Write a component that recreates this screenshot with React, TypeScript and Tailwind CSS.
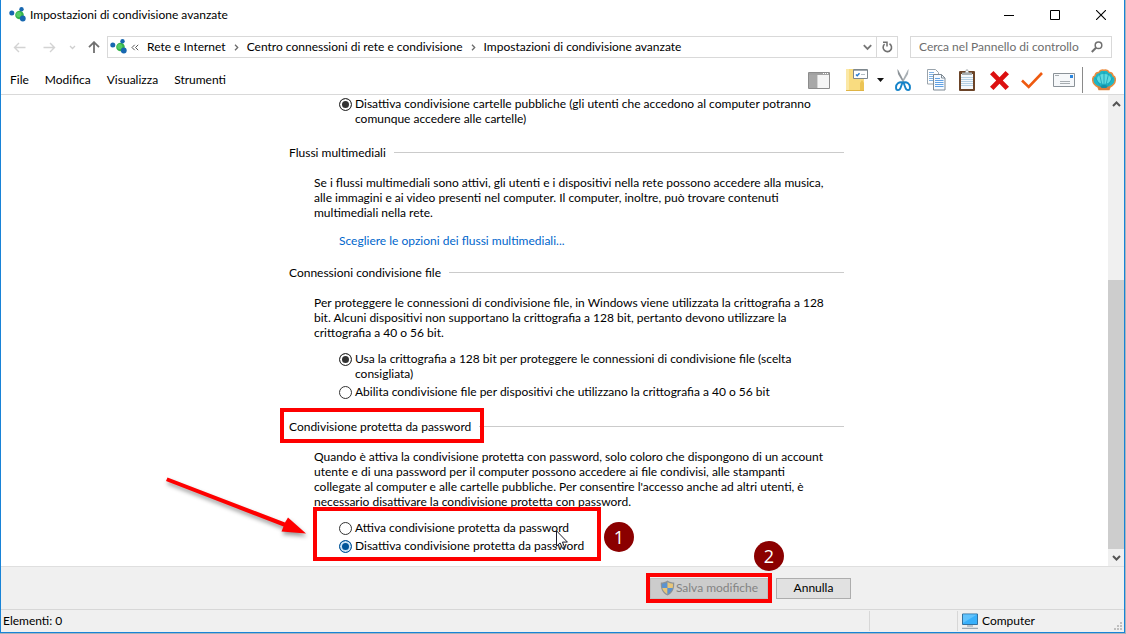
import type React from "react";

interface SectionProps {
  title: string;
  highlighted?: boolean;
  className?: string;
  children: React.ReactNode;
}

interface OptionProps {
  name: string;
  checked?: boolean;
  active?: boolean;
  children: React.ReactNode;
}

const NetworkIcon = () => (
  <svg width="17" height="17" viewBox="0 0 17 17" className="shrink-0">
    <circle cx="10.5" cy="8" r="4.300" fill="#35b34a" />
    <circle cx="9.800" cy="7.500" r="2.600" fill="#55cc66" />
    <circle cx="2.800" cy="6" r="2.500" fill="#1767b0" />
    <circle cx="12.500" cy="2.300" r="2.200" fill="#1767b0" />
    <circle cx="13.800" cy="11.500" r="2.900" fill="#1767b0" />
  </svg>
);

const Chevron = () => (
  <svg width="5" height="7" viewBox="0 0 5 7" fill="none" className="shrink-0">
    <path d="M1 .8 3.700 3.500 1 6.200" stroke="#6b6b6b" strokeWidth="1.300" />
  </svg>
);

const TitleBar = () => (
  <header className="flex h-[30px] items-center pl-2">
    <NetworkIcon />
    <h1 className="ml-1 flex-1">Impostazioni di condivisione avanzate</h1>
    <button aria-label="Riduci a icona" className="flex h-[28px] w-[46px] items-center justify-center">
      <svg width="10" height="10" viewBox="0 0 10 10">
        <path d="M0 5.500h10" stroke="#000" />
      </svg>
    </button>
    <button aria-label="Ingrandisci" className="flex h-[28px] w-[46px] items-center justify-center">
      <svg width="10" height="10" viewBox="0 0 10 10" fill="none">
        <path d="M.5 .5h9v9h-9z" stroke="#000" />
      </svg>
    </button>
    <button aria-label="Chiudi" className="flex h-[28px] w-[46px] items-center justify-center">
      <svg width="10" height="10" viewBox="0 0 10 10" fill="none">
        <path d="M0 0 10 10M10 0 0 10" stroke="#000" strokeWidth="1.100" />
      </svg>
    </button>
  </header>
);

const AddressBar = () => (
  <nav className="flex h-[34px] items-center pr-3 pl-3">
    <button aria-label="Indietro" className="w-[30px]">
      <svg width="13" height="11" viewBox="0 0 13 11" fill="none">
        <path d="M12.500 5.500H1.500M6 1 1.500 5.500 6 10" stroke="#d3d3d3" strokeWidth="1.400" />
      </svg>
    </button>
    <button aria-label="Avanti" className="w-[26px]">
      <svg width="13" height="11" viewBox="0 0 13 11" fill="none">
        <path d="M.5 5.500h11M7 1l4.500 4.500L7 10" stroke="#d3d3d3" strokeWidth="1.400" />
      </svg>
    </button>
    <button aria-label="Percorsi recenti" className="w-[19px]">
      <svg width="7" height="5" viewBox="0 0 7 5" fill="none">
        <path d="M1 1 3.500 3.500 6 1" stroke="#cfcfcf" strokeWidth="1.300" />
      </svg>
    </button>
    <button aria-label="Livello superiore" className="w-[19px]">
      <svg width="12" height="12" viewBox="0 0 12 12" fill="none">
        <path d="M6 12V1.500M1 6.200 6 1.200l5 5" stroke="#707070" strokeWidth="1.800" />
      </svg>
    </button>
    <div className="flex h-[22px] flex-1 border border-[#d9d9d9]">
      <div className="flex flex-1 items-center gap-2 pl-[2px] whitespace-nowrap">
        <div className="flex items-center gap-1">
          <NetworkIcon />
          <svg width="8" height="7" viewBox="0 0 8 7" fill="none">
            <path d="M3.700 .8 1 3.500l2.700 2.700M7.200 .8 4.500 3.500l2.700 2.700" stroke="#555" />
          </svg>
        </div>
        <a href="#rete">Rete e Internet</a>
        <Chevron />
        <a href="#centro">Centro connessioni di rete e condivisione</a>
        <Chevron />
        <a href="#avanzate">Impostazioni di condivisione avanzate</a>
      </div>
      <button aria-label="Posizioni precedenti" className="flex w-[18px] items-center justify-center">
        <svg width="9" height="7" viewBox="0 0 9 7" fill="none">
          <path d="M.8 1.200 4.500 5 8.200 1.200" stroke="#777" strokeWidth="1.800" />
        </svg>
      </button>
      <button aria-label="Aggiorna" className="flex w-[21px] items-center justify-center border-l border-[#d9d9d9]">
        <svg width="11" height="12" viewBox="0 0 11 12" fill="none">
          <path d="M7.500 2.800A4.200 4.200 0 1 1 2.600 3.200" stroke="#707070" strokeWidth="1.600" />
          <path d="M1 1.300h4v4.200" stroke="#707070" strokeWidth="1.500" />
        </svg>
      </button>
    </div>
    <label className="ml-3 flex h-[22px] w-[202px] items-center border border-[#d9d9d9] pr-2 pl-2">
      <input
        type="text"
        aria-label="Cerca"
        placeholder="Cerca nel Pannello di controllo"
        className="w-full min-w-0 flex-1 outline-none placeholder:text-[#6d6d6d]"
      />
      <svg width="12" height="12" viewBox="0 0 12 12" fill="none" className="shrink-0">
        <circle cx="7.500" cy="4.300" r="3.300" stroke="#707070" strokeWidth="1.500" />
        <path d="M5 6.700 .8 11" stroke="#707070" strokeWidth="2" />
      </svg>
    </label>
  </nav>
);

const Toolbar = () => (
  <div className="flex items-center">
    <button aria-label="Riquadro" className="w-[38px]">
      <svg width="22" height="17" viewBox="0 0 22 17">
        <path d="M.5 .5h21v16H.5z" fill="#f5f5f5" stroke="#8c8c8c" />
        <path d="M1 1h20v2H1z" fill="#a2a2a2" />
        <path d="M15 1.500h1M17 1.500h1M19 1.500h1" stroke="#fff" />
        <path d="M1 3h8v13H1z" fill="#a8a8a8" />
        <path d="M9.500 3v13" stroke="#d4d4d4" />
      </svg>
    </button>
    <button aria-label="Organizza" className="w-[31px]">
      <svg width="22" height="22" viewBox="0 0 22 22">
        <path d="M0 0h18v22H0z" fill="#f9dc80" />
        <path d="M0 0h3v22H0z" fill="#fbe8a6" />
        <path d="M14 14l2-3 2 3v8h-4z" fill="#ecc455" />
        <path d="M0 21.500h18" stroke="#dfb445" />
        <path d="M7.500 .5h14v9h-14z" fill="#fff" stroke="#7e878d" />
        <path d="M8 1h13v1H8z" fill="#a4abb0" />
        <path d="M10 5.500 11.200 6.800l2.300-2.600" fill="none" stroke="#2478cc" strokeWidth="1.400" />
        <path d="M15 5.500h4" stroke="#b5bfc5" />
      </svg>
    </button>
    <button aria-label="Altre opzioni" className="w-[18px]">
      <svg width="7" height="4" viewBox="0 0 7 4">
        <path d="M0 0h7L3.500 4z" fill="#111" />
      </svg>
    </button>
    <button aria-label="Taglia" className="w-[32px]">
      <svg width="16" height="23" viewBox="0 0 16 23" fill="none">
        <path d="M2.300 0 3.500 1.500 10.500 15 8.600 14.500 3 5z" fill="#8d9499" />
        <path d="M13.700 0 12.500 1.500 5.500 15l1.900-.5L13 5z" fill="#a9b0b5" />
        <path d="M7.500 13.500C4 12.500 1 15 1 18.500s3.500 3.500 4.700 0zM8.500 13.500c3.500-1 6.500 1.500 6.500 5s-3.500 3.500-4.700 0z" stroke="#1583c9" strokeWidth="1.900" />
      </svg>
    </button>
    <button aria-label="Copia" className="w-[32px]">
      <svg width="19" height="22" viewBox="0 0 19 22">
        <path d="M.5 .5h8l3 3V15H.5z" fill="#fff" stroke="#9aa4ac" />
        <path d="M2 3.500h5M2 5.500h7M2 7.500h7M2 9.500h7M2 11.500h7" stroke="#7fb2e5" />
        <path d="M6.500 5.500h8l3.500 3.500v12H6.500z" fill="#f6faff" stroke="#7f8a94" />
        <path d="M14.500 5.500V9H18" fill="none" stroke="#7f8a94" />
        <path d="M8 9.500h5M8 11.500h8.500M8 13.500h8.500M8 15.500h8.500M8 17.500h8.500" stroke="#62a2e4" />
      </svg>
    </button>
    <button aria-label="Incolla" className="w-[31px]">
      <svg width="16" height="22" viewBox="0 0 16 22">
        <rect y="2" width="16" height="20" rx="1" fill="#6b4428" />
        <path d="M2 5h12v15H2z" fill="#f4f9fd" />
        <path d="M2 8.500h12M2 10.500h12M2 12.500h12M2 14.500h12M2 16.500h12" stroke="#b5d0e4" />
        <path d="M3 6V3.500h3L7 .5h2l1 3h3V6z" fill="#a7adb0" />
        <circle cx="8" cy="2.500" r="1" fill="#fff" />
      </svg>
    </button>
    <button aria-label="Elimina" className="w-[31px]">
      <svg width="19" height="19" viewBox="0 0 19 19">
        <path d="M3.500 0 9.500 6.200 15.500 0 19 3.300 12.800 9.500 19 15.700 15.500 19 9.500 12.800 3.500 19 0 15.700 6.200 9.500 0 3.300z" fill="#dc1010" />
      </svg>
    </button>
    <button aria-label="Proprietà" className="w-[32px]">
      <svg width="22" height="17" viewBox="0 0 22 17" fill="none">
        <path d="M1 8.500 7.700 15 21 1" stroke="#ee5a10" strokeWidth="2.600" />
      </svg>
    </button>
    <button aria-label="Rinomina" className="w-[29px]">
      <svg width="22" height="14" viewBox="0 0 22 14">
        <path d="M.5 .5h21v13H.5z" fill="#f6f8fa" stroke="#8b9298" />
        <path d="M2 2.500h4M7 8.500h10M7 10.500h10" stroke="#a6acb0" />
        <path d="M17 2h3v3h-3z" fill="#2a86df" />
      </svg>
    </button>
    <span className="h-[26px] w-px bg-[#8a8a8a]" />
    <button aria-label="Classic Shell" className="ml-[9px] w-[24px]">
      <svg width="24" height="22" viewBox="0 0 24 22">
        <path
          d="M7 20.500 6 18C3 16.500.7 13.500.7 10.500c0-2 1-3.300 2.300-3.700C3.300 4.500 5 3.400 6.800 3.500 7.700 1.600 10 .8 12 1.300c2-.5 4.300.3 5.200 2.200 1.800-.1 3.500 1 3.800 3.300 1.300.4 2.300 1.700 2.300 3.700 0 3-2.300 6-5.300 7.500l-1 2.500z"
          fill="#1fb5c4"
          stroke="#ec8b3c"
          strokeWidth="1.500"
        />
        <ellipse cx="12" cy="10" rx="7" ry="5" fill="#5edbe0" />
        <path d="M12 18V3M10.500 18 7.500 5M13.500 18l3-13M9 18 3.500 9M15 18l5.500-9" stroke="#1a9db5" fill="none" strokeWidth=".8" />
        <path d="M5.500 16.500c3 2 10 2 13 0L17 21H7z" fill="#d8803f" />
        <path d="M8.500 17c2-1.500 5-1.500 7 0l-1 2h-5z" fill="#1590a8" />
      </svg>
    </button>
  </div>
);

const MenuBar = () => (
  <div className="flex h-[31px] items-center justify-between border-b border-[#d9d9d9] pt-[2px] pr-2 pl-[9px]">
    <div className="flex gap-4">
      <button>File</button>
      <button>Modifica</button>
      <button>Visualizza</button>
      <button>Strumenti</button>
    </div>
    <Toolbar />
  </div>
);

const Option: React.FC<OptionProps> = ({ name, checked = false, active = false, children }) => (
  <label className="flex items-start gap-[3px]">
    <input
      type="radio"
      name={name}
      defaultChecked={checked}
      className={`mt-[2px] h-[13px] w-[13px] shrink-0 appearance-none rounded-full border ${
        active
          ? "border-[#005499] checked:bg-[#005499] checked:shadow-[inset_0_0_0_2px_#cce4f7]"
          : "border-[#333] checked:bg-[#333] checked:shadow-[inset_0_0_0_2px_#fff]"
      }`}
    />
    <span>{children}</span>
  </label>
);

const Section: React.FC<SectionProps> = ({ title, highlighted = false, className = "", children }) => (
  <section className={className}>
    <div className="flex items-center">
      <h2 className="relative pr-2">
        {title}
        {highlighted && (
          <span className="absolute -top-[11px] -right-[5px] -bottom-[9px] -left-[9px] border-4 border-[#fe0000]" />
        )}
      </h2>
      <span className="h-px flex-1 bg-[#cbcbcb]" />
    </div>
    <div className="mt-[15px] pl-[25px]">{children}</div>
  </section>
);

const Badge = ({ value, className }: { value: number; className: string }) => (
  <span
    className={`absolute z-10 flex h-[30px] w-[30px] items-center justify-center rounded-full bg-[#8b0000] font-['Open_Sans',sans-serif] text-lg text-white ${className}`}
  >
    {value}
  </span>
);

const Arrow = () => (
  <svg
    width="148"
    height="68"
    viewBox="0 0 148 68"
    className="absolute -top-[44px] -left-[150px] drop-shadow-[1px_3px_2px_rgba(0,0,0,0.4)]"
  >
    <path d="M3.500 1.500 2 5 119.500 50.500 117.500 55.500 142 57.500 124 41.500 121 46.500z" fill="#fe0000" />
  </svg>
);

const Scrollbar = () => (
  <div className="flex w-4 shrink-0 flex-col items-center bg-[#f0f0f0]">
    <button aria-label="Scorri in alto" className="flex h-[17px] items-center">
      <svg width="9" height="6" viewBox="0 0 9 6" fill="none">
        <path d="M1 5 4.500 1.500 8 5" stroke="#555" strokeWidth="2" />
      </svg>
    </button>
    <div className="w-full flex-[168]" />
    <div className="w-full flex-[269] bg-[#cdcdcd]" />
    <button aria-label="Scorri in basso" className="flex h-[17px] items-center">
      <svg width="9" height="6" viewBox="0 0 9 6" fill="none">
        <path d="M1 1 4.500 4.500 8 1" stroke="#555" strokeWidth="2" />
      </svg>
    </button>
  </div>
);

const Content = () => (
  <main className="flex flex-1">
    <div className="flex-1 pt-px pb-3 pl-72 leading-[15px] whitespace-nowrap">
      <div className="max-w-[555px]">
        <div className="pl-[50px]">
          <Option name="cartelle" checked>
            Disattiva condivisione cartelle pubbliche (gli utenti che accedono al computer potranno
            <br />
            comunque accedere alle cartelle)
          </Option>
        </div>

        <Section title="Flussi multimediali" className="mt-[19px]">
          <p>
            Se i flussi multimediali sono attivi, gli utenti e i dispositivi nella rete possono accedere alla musica,
            <br />
            alle immagini e ai video presenti nel computer. Il computer, inoltre, può trovare contenuti
            <br />
            multimediali nella rete.
          </p>
          <a href="#flussi" className="mt-[13px] ml-[25px] block text-[#0066cc]">
            Scegliere le opzioni dei flussi multimediali...
          </a>
        </Section>

        <Section title="Connessioni condivisione file" className="mt-[17px]">
          <p>
            Per proteggere le connessioni di condivisione file, in Windows viene utilizzata la crittografia a 128
            <br />
            bit. Alcuni dispositivi non supportano la crittografia a 128 bit, pertanto devono utilizzare la
            <br />
            crittografia a 40 o 56 bit.
          </p>
          <div className="mt-[11px] flex flex-col gap-[3px] pl-[25px]">
            <Option name="crittografia" checked>
              Usa la crittografia a 128 bit per proteggere le connessioni di condivisione file (scelta
              <br />
              consigliata)
            </Option>
            <Option name="crittografia">
              Abilita condivisione file per dispositivi che utilizzano la crittografia a 40 o 56 bit
            </Option>
          </div>
        </Section>

        <Section title="Condivisione protetta da password" highlighted className="mt-5">
          <p>
            Quando è attiva la condivisione protetta con password, solo coloro che dispongono di un account
            <br />
            utente e di una password per il computer possono accedere ai file condivisi, alle stampanti
            <br />
            collegate al computer e alle cartelle pubbliche. Per consentire l'accesso anche ad altri utenti, è
            <br />
            necessario disattivare la condivisione protetta con password.
          </p>
          <div className="relative mt-[11px] flex w-[287px] flex-col gap-[3px] pl-[25px]">
            <Option name="password">Attiva condivisione protetta da password</Option>
            <Option name="password" checked active>
              Disattiva condivisione protetta da password
            </Option>
            <span className="absolute -top-[13px] right-0 -bottom-2 -left-px border-4 border-[#fe0000]" />
            <Arrow />
            <Badge value={1} className="top-[2px] left-[290px]" />
            <svg width="13" height="20" viewBox="0 0 13 20" className="absolute top-[10px] left-[242px]">
              <path d="M.5 .8v15.500l3.600-3.400 2.300 5.400 2.300-1-2.300-5.200h5z" fill="#fff" fillOpacity=".8" stroke="#1a1a2a" />
            </svg>
          </div>
        </Section>
      </div>
    </div>
    <Scrollbar />
  </main>
);

const ShieldIcon = () => (
  <svg width="15" height="16" viewBox="0 0 15 16" className="shrink-0">
    <path d="M7.500 .5C5.500 2 3 2.500.8 2.500.5 8.500 2 13 7.500 15.500 13 13 14.500 8.500 14.200 2.500 12 2.500 9.500 2 7.500.5z" fill="#8d9296" />
    <path d="M7.500 2C6 3.200 4 3.700 2 3.700c0 1.500 0 2.800.3 4.300h5.200z" fill="#5c93cf" />
    <path d="M7.500 2C9 3.200 11 3.700 13 3.700c0 1.500 0 2.800-.3 4.300H7.500z" fill="#e8c67a" />
    <path d="M2.300 8h5.200v6.200C4.800 12.800 2.900 10.800 2.300 8z" fill="#e8c67a" />
    <path d="M12.700 8H7.500v6.200c2.700-1.400 4.600-3.400 5.200-6.200z" fill="#5c93cf" />
  </svg>
);

const Footer = () => (
  <div className="flex h-[43px] items-center justify-end gap-2 border-t border-[#dfdfdf] bg-[#f0f0f0] pr-[273px]">
    <div className="relative">
      <button
        disabled
        className="flex h-[21px] w-[118px] items-center justify-center gap-px border border-[#bfbfbf] bg-[#cccccc] text-[#838383]"
      >
        <ShieldIcon />
        Salva modifiche
      </button>
      <span className="absolute -inset-1 -top-[5px] border-4 border-[#fe0000]" />
      <Badge value={2} className="-top-[37px] left-[104px]" />
    </div>
    <button className="h-[21px] w-[75px] border border-[#adadad] bg-[#e1e1e1]">Annulla</button>
  </div>
);

const StatusBar = () => (
  <footer className="flex h-[23px] items-center border-t border-[#d7d7d7] bg-[#f0f0f0]">
    <span className="flex-1 pl-[2px]">Elementi: 0</span>
    <span className="h-5 w-[88px] border-l border-[#d7d7d7]" />
    <div className="flex h-5 w-[167px] items-center gap-1 border-l border-[#d7d7d7] pl-1">
      <svg width="16" height="16" viewBox="0 0 16 16">
        <path d="M.5 1h15v10.500H.5z" fill="#38b0fb" stroke="#33719f" />
        <path d="M1 1.500h14L1 10z" fill="#62c3fc" />
        <path d="M5 13h6M0 15.300h16" stroke="#8798a6" />
      </svg>
      <span className="flex-1">Computer</span>
      <svg width="9" height="9" viewBox="0 0 9 9" className="mr-px self-end">
        <path d="M6 0h2v2H6zM3 3h2v2H3zM6 3h2v2H6zM0 6h2v2H0zM3 6h2v2H3zM6 6h2v2H6z" fill="#bfbfbf" />
      </svg>
    </div>
  </footer>
);

export default function App() {
  return (
    <div className="flex min-h-screen flex-col bg-[#a9b3bb] pr-px pb-px font-['Lato','Open_Sans',sans-serif] text-xs text-black">
      <div className="flex flex-1 flex-col border-x border-b border-[#1883d7] bg-white">
        <TitleBar />
        <AddressBar />
        <MenuBar />
        <Content />
        <Footer />
        <StatusBar />
      </div>
    </div>
  );
}
